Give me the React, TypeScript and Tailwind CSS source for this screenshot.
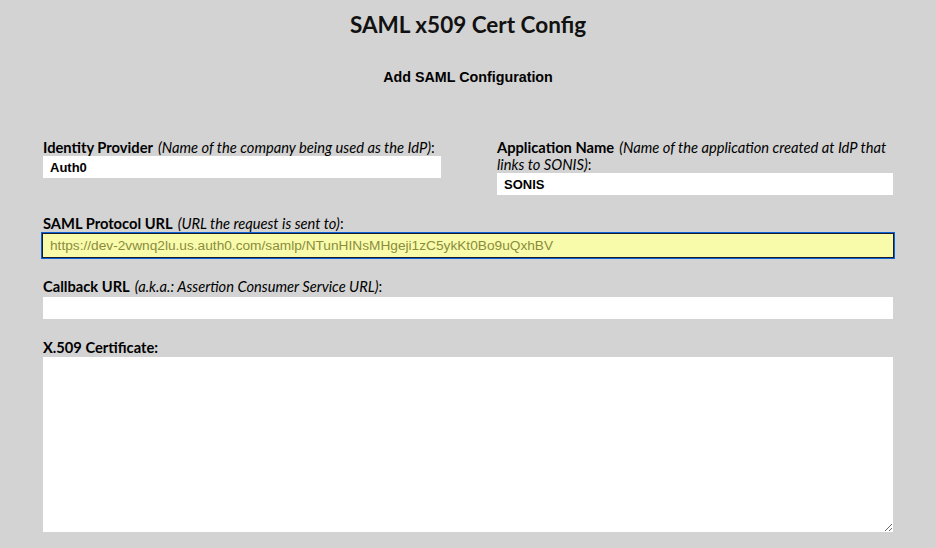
import { useState } from "react";

const Label = ({ title, hint }: { title: string; hint?: string }) => (
  <label className="block text-[14.7px] leading-[17px] text-black font-['Lato',sans-serif]">
    <span className="font-bold">{title}</span>
    {hint && <span className="italic ml-[5px]">({hint})</span>}
    {hint ? ":" : ""}
  </label>
);

const App = () => {
  const [idp, setIdp] = useState("Auth0");
  const [app, setApp] = useState("SONIS");
  const [url, setUrl] = useState(
    "https://dev-2vwnq2lu.us.auth0.com/samlp/NTunHINsMHgeji1zC5ykKt0Bo9uQxhBV"
  );

  return (
    <div className="min-h-[548px] w-full bg-[#d3d3d3] font-['Liberation_Sans',Arial,sans-serif]">
      <div className="w-[850px] mx-auto">
        <h1 className="pt-[11px] text-center text-[22.5px] leading-[27px] font-bold text-[#111] font-['Lato',sans-serif]">
          SAML x509 Cert Config
        </h1>
        <h2 className="mt-[31px] text-center text-[14.3px] leading-[17px] font-bold text-black">
          Add SAML Configuration
        </h2>

        <div className="mt-[53px] grid grid-cols-[398px_396px] gap-x-[56px]">
          <div className="flex flex-col">
            <Label title="Identity Provider" hint="Name of the company being used as the IdP" />
            <input
              value={idp}
              onChange={(e) => setIdp(e.target.value)}
              className="h-[22px] w-full bg-white px-[7px] text-[13px] font-bold text-black outline-none"
            />
          </div>
          <div className="flex flex-col">
            <Label
              title="Application Name"
              hint="Name of the application created at IdP that links to SONIS"
            />
            <input
              value={app}
              onChange={(e) => setApp(e.target.value)}
              className="h-[22px] w-full bg-white px-[7px] text-[13px] font-bold text-black outline-none"
            />
          </div>
        </div>

        <div className="mt-[20px]">
          <Label title="SAML Protocol URL" hint="URL the request is sent to" />
          <input
            value={url}
            onChange={(e) => setUrl(e.target.value)}
            className="mt-[1px] -mx-px h-[25px] w-[852px] border border-[#1b1b2a] bg-[#f8fcaa] px-[7px] text-[13.7px] text-[#8b8b3e] outline outline-1 outline-[#0a64d8]"
          />
        </div>

        <div className="mt-[20px]">
          <Label title="Callback URL" hint="a.k.a.: Assertion Consumer Service URL" />
          <input className="mt-[1px] h-[22px] w-full bg-white px-[7px] text-[13px] outline-none" />
        </div>

        <div className="mt-[20px]">
          <Label title="X.509 Certificate:" />
          <textarea className="mt-[1px] block h-[175px] w-full bg-white p-[6px] text-[13px] outline-none" />
        </div>
      </div>
    </div>
  );
};

export default App;
